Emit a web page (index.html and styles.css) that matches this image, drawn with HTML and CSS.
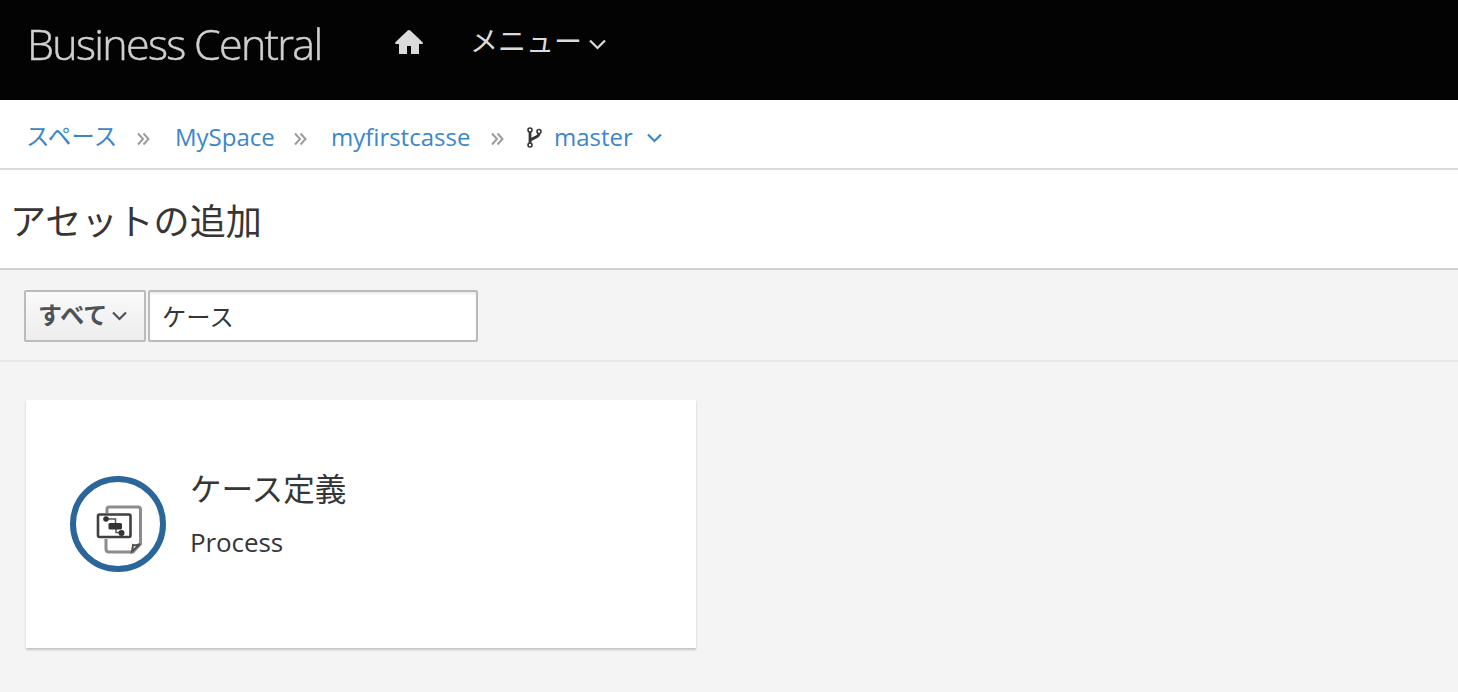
FILE: index.html
```
<!DOCTYPE html>
<html lang="ja">
<head>
<meta charset="utf-8">
<title>Business Central</title>
<link rel="stylesheet" href="styles.css">
</head>
<body>
<header class="navbar">
  <div class="brand">Business Central</div>
  <svg class="home" width="28" height="24" viewBox="0 0 28 24"><path d="M14 0Q14.700 0 15.300.6L27.600 12.300Q28.400 13.800 27 14H24V24H16V16H12V24H4V14H1Q-.4 13.800.4 12.300L12.700.6Q13.300 0 14 0Z"/></svg>
  <div class="menu"><span>メニュー</span><svg class="chevron" width="17" height="11" viewBox="0 0 17 11"><path d="M1 1.500L8.500 9L16 1.500"/></svg></div>
</header>
<nav class="breadcrumb">
  <a class="crumb-space">スペース</a>
  <svg class="sep" width="13" height="14" viewBox="0 0 13 14"><path d="M1 1.500L6 7L1 12.500M6.500 1.500L11.500 7L6.500 12.500"/></svg>
  <a class="crumb-team">MySpace</a>
  <svg class="sep" width="13" height="14" viewBox="0 0 13 14"><path d="M1 1.500L6 7L1 12.500M6.500 1.500L11.500 7L6.500 12.500"/></svg>
  <a class="crumb-project">myfirstcasse</a>
  <svg class="sep" width="13" height="14" viewBox="0 0 13 14"><path d="M1 1.500L6 7L1 12.500M6.500 1.500L11.500 7L6.500 12.500"/></svg>
  <svg class="branch" width="15" height="21" viewBox="0 0 15 21"><path class="stem" d="M3 5V16M12 6.500C12 11 4.500 10.500 3 14"/><circle cx="3" cy="3" r="2"/><circle cx="12" cy="4.500" r="2"/><circle cx="3" cy="18" r="2"/></svg>
  <a class="crumb-branch">master</a>
  <svg class="chevron chevron-link" width="15" height="10" viewBox="0 0 15 10"><path d="M1 1.500L7.500 8L14 1.500"/></svg>
</nav>
<h1 class="title">アセットの追加</h1>
<section class="toolbar">
  <button class="filter"><span>すべて</span><svg class="chevron" width="15" height="10" viewBox="0 0 15 10"><path d="M1 1.500L7.500 8L14 1.500"/></svg></button>
  <input class="search" type="text" value="ケース">
</section>
<main class="content">
  <article class="card">
    <div class="badge">
      <svg width="50" height="50" viewBox="0 0 50 50">
        <path class="page" d="M12 9V5Q12 3 14 3H43Q45.500 3 45.500 5.500V40L38 48H14Q11 48 11 45V35"/>
        <path class="fold" d="M45 40L37 47.500L38 41Q41 42 45 40Z"/>
        <rect class="frame" x="3" y="10.500" width="32.500" height="22.500" rx="1.500"/>
        <path class="flow" d="M10 15H20.500V22H21V28.500H28"/>
        <circle class="node" cx="11" cy="15" r="2.800"/>
        <rect class="node" x="13.500" y="19" width="13.500" height="6.500" rx="1.500"/>
        <circle class="node" cx="26.500" cy="29" r="3"/>
      </svg>
    </div>
    <div class="details">
      <h2>ケース定義</h2>
      <p>Process</p>
    </div>
  </article>
</main>
</body>
</html>
```
FILE: styles.css
```
* { box-sizing: border-box; }
body {
  margin: 0;
  min-height: 692px;
  background: #f4f4f4;
  color: #363636;
  font-family: "Open Sans", "Noto Sans CJK JP", sans-serif;
  font-size: 24px;
}
h1, h2, p { margin: 0; font-weight: 400; }
svg { flex: none; display: block; fill: none; }
.navbar { height: 100px; background: #030303; display: flex; color: #dbdbdb; }
.brand {
  width: 368px;
  margin-left: 27px;
  font-size: 43px;
  font-weight: 300;
  line-height: 58px;
  padding-top: 15px;
  letter-spacing: -1.7px;
  color: #d0d0d0;
  -webkit-text-stroke: .5px #d0d0d0;
  filter: blur(.5px);
  white-space: nowrap;
}
.home { margin-top: 30px; fill: #dbdbdb; }
.menu { display: flex; margin-left: 47px; font-size: 28px; line-height: 40px; padding-top: 21px; }
.menu .chevron { margin: 18px 0 0 7px; }
.chevron { stroke: currentColor; stroke-width: 2.200; }
.breadcrumb {
  height: 70px;
  background: #fff;
  border-bottom: 2px solid #dcdcdc;
  display: flex;
  align-items: center;
  padding: 4px 0 0 26px;
  line-height: 34px;
  color: #3a87cb;
  white-space: nowrap;
}
.crumb-space { width: 111px; font-size: 23.500px; }
.crumb-team { width: 107px; margin-left: 25px; }
.crumb-team + .sep { margin-left: 12px; }
.crumb-team, .crumb-project, .crumb-branch { padding-top: 2px; }
.crumb-project { width: 147px; margin-left: 24px; }
.crumb-project + .sep { margin-left: 13px; }
.crumb-branch { margin-left: 12px; width: 82px; }
.sep { stroke: #9c9c9c; stroke-width: 2; margin-top: 5px; }
.branch { margin: 3px 0 0 23px; stroke: #363636; stroke-width: 1.600; }
.stem { stroke-width: 2.800; }
.chevron-link { margin: 4px 0 0 11px; }
.title {
  height: 100px;
  background: #fff;
  border-bottom: 2px solid #d1d1d1;
  padding: 25px 0 0 10px;
  font-size: 36.100px;
  line-height: 52px;
}
.toolbar { height: 92px; border-bottom: 2px solid #e8e8e8; display: flex; gap: 2px; padding: 20px 0 0 24px; }
.filter {
  width: 122px;
  height: 52px;
  border: 2px solid #bbb;
  border-radius: 2px;
  background: linear-gradient(#fafafa, #ededed);
  display: flex;
  align-items: center;
  padding: 0 0 5px 12px;
  color: #4d5258;
  font: 700 24px "Open Sans", "Noto Sans CJK JP", sans-serif;
}
.filter .chevron { margin: 5px 0 0 3px; }
.search {
  width: 330px;
  height: 52px;
  border: 2px solid #bbb;
  border-radius: 2px;
  box-shadow: inset 0 2px 2px rgba(3, 3, 3, .075);
  padding: 0 12px 2px;
  background: #fff;
  color: #363636;
  font: 24.300px "Open Sans", "Noto Sans CJK JP", sans-serif;
}
.filter span { width: 71px; text-align: left; white-space: nowrap; }
.content { padding: 38px 26px; }
.card {
  width: 670px;
  height: 248px;
  background: #fff;
  box-shadow: 0 2px 2px rgba(3, 3, 3, .2);
  display: flex;
  padding: 0 44px;
}
.badge {
  width: 96px;
  height: 96px;
  margin-top: 76px;
  border: 6px solid #2a6699;
  border-radius: 50%;
  padding: 22px 0 0 19px;
}
.badge svg { filter: blur(.5px); }
.page { stroke: #8c8c8c; stroke-width: 3; }
.fold { stroke: #505050; stroke-width: 2; }
.frame { fill: #fff; stroke: #404040; stroke-width: 2.600; }
.flow { stroke: #555; stroke-width: 1.500; }
.node { fill: #333; }
.details { margin: 66px 0 0 24px; }
.details h2 { font-size: 31.600px; line-height: 46px; }
.details p { font-size: 26px; line-height: 36px; margin-top: 12px; letter-spacing: -.1px; }
```
